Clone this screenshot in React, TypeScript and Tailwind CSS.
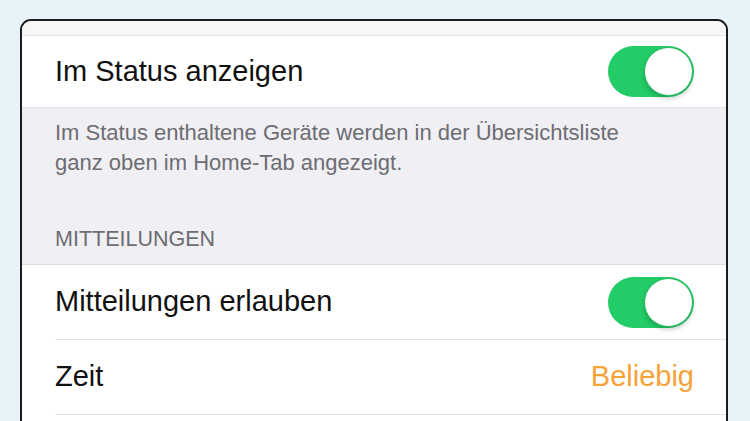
import React from "react";

function Toggle() {
  return (
    <div className="relative h-[51px] w-[86px] shrink-0 rounded-full bg-[#22cc66]">
      <div className="absolute right-[1px] top-[1px] h-[49px] w-[49px] rounded-full border-[1.5px] border-[#1fb85c] bg-white shadow-[0_3px_4px_rgba(0,0,0,0.18)]" />
    </div>
  );
}

function Row({ label, right, last }: { label?: string; right?: React.ReactNode; last?: boolean }) {
  return (
    <div className="pl-[33px] bg-white">
      <div className={"flex h-[75px] items-center justify-between pr-[32px] " + (last ? "" : "border-b border-[#e3e3e7]")}>
        <span className="text-[29px] text-[#111]">{label}</span>
        {right}
      </div>
    </div>
  );
}

export default function App() {
  return (
    <div className="h-[421px] overflow-hidden bg-[#e8f2f9] px-[20px] pt-[19px]" style={{ fontFamily: '"Liberation Sans", Arial, sans-serif' }}>
      <div className="w-[708px] overflow-hidden rounded-[11px] border-[2px] border-[#1b1b1b] bg-[#efeff4]">
        <div className="h-[15px] border-b border-[#e6e6ea] bg-[#f7f7f9]" />
        <div className="flex h-[71px] items-center justify-between bg-white pl-[33px] pr-[32px]">
          <span className="text-[29px] text-[#111]">Im Status anzeigen</span>
          <Toggle />
        </div>
        <div className="border-t border-[#e3e3e7] px-[33px] pt-[10px] pb-[10px] text-[#6d6d72]">
          <p className="text-[22px] leading-[30px]">
            Im Status enthaltene Geräte werden in der Übersichtsliste
            <br />
            ganz oben im Home-Tab angezeigt.
          </p>
          <div className="mt-[46px] text-[21.5px] leading-[30px]">MITTEILUNGEN</div>
        </div>
        <div className="border-t border-[#dcdce0]">
          <Row label="Mitteilungen erlauben" right={<Toggle />} />
          <Row label="Zeit" right={<span className="text-[29px] text-[#f5a236]">Beliebig</span>} />
          <Row last />
        </div>
      </div>
    </div>
  );
}
